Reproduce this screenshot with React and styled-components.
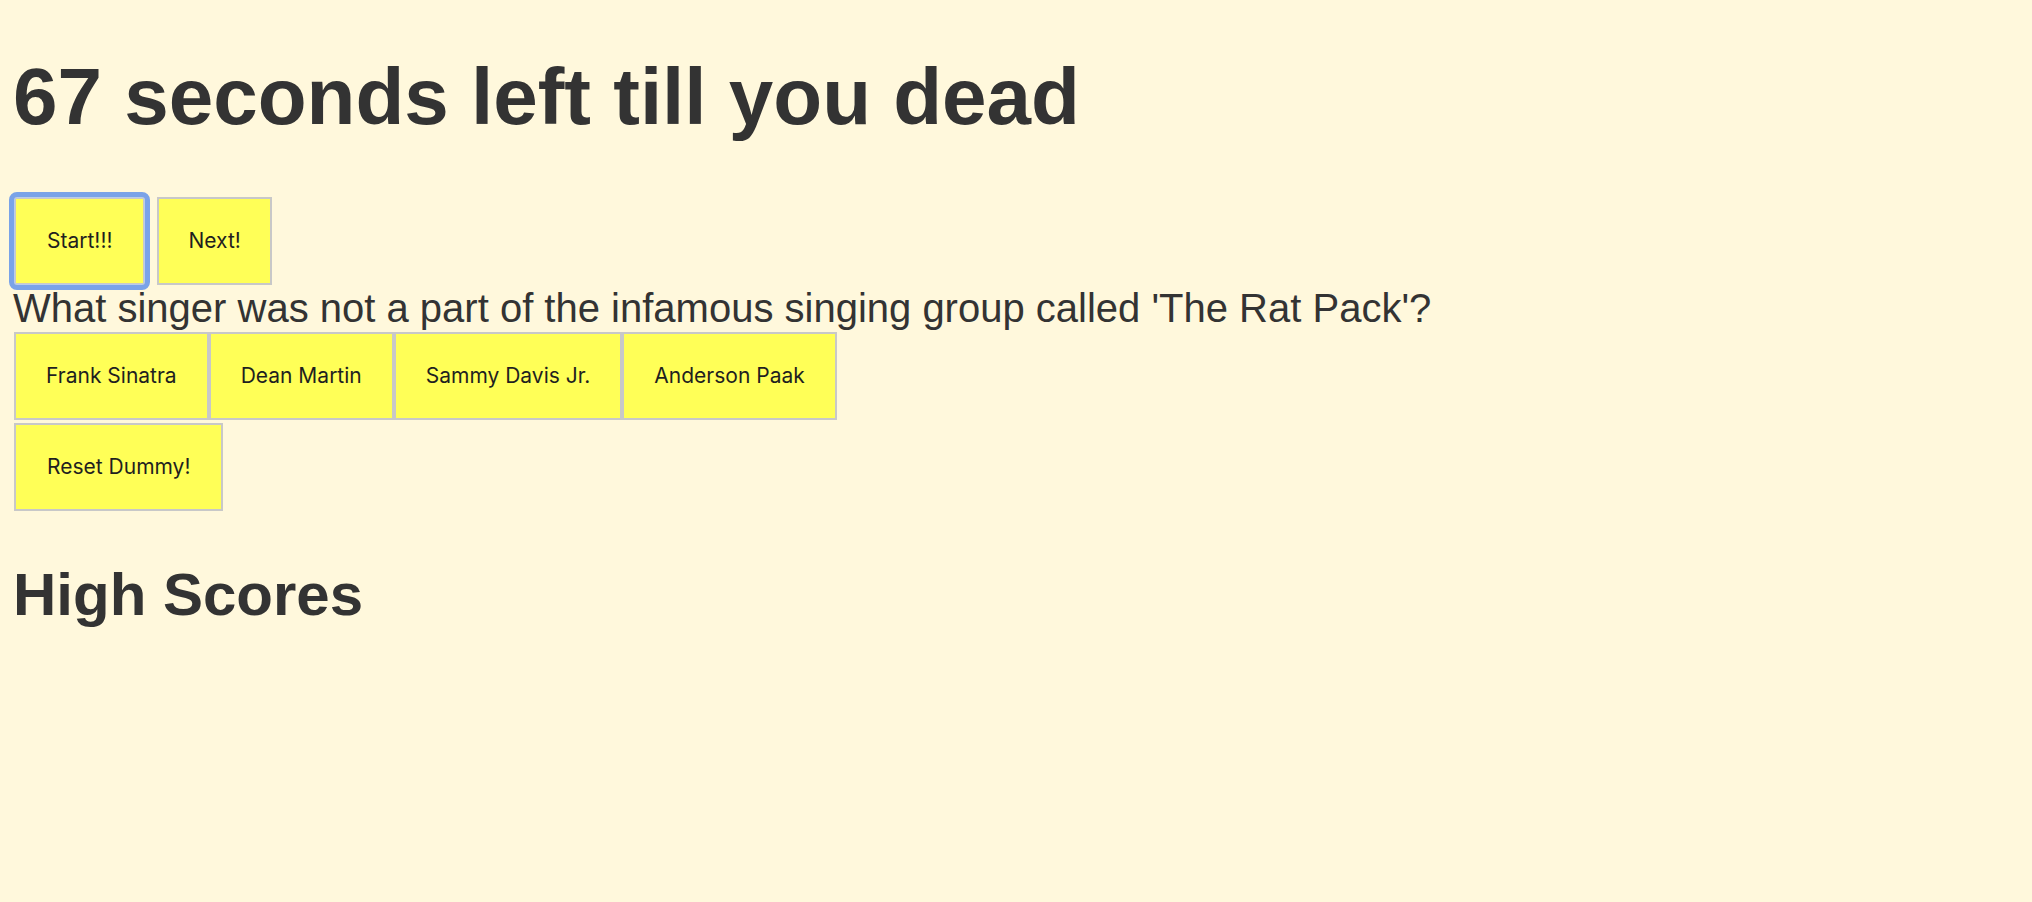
import React from "react";
import styled, { createGlobalStyle } from "styled-components";

const GlobalStyle = createGlobalStyle`
  html, body {
    margin: 0;
    padding: 0;
    background: #fff8dc;
  }
  body {
    font-family: "Liberation Sans", Arial, Helvetica, sans-serif;
    color: #333;
  }
`;

const Page = styled.main`
  padding: 0 13px;
  min-height: 902px;
  box-sizing: border-box;
  overflow: hidden;
`;

const Title = styled.h1`
  margin: 51px 0 54px;
  font-size: 80px;
  line-height: 92px;
  font-weight: 700;
  color: #333;
  white-space: nowrap;
`;

const Row = styled.div`
  display: flex;
  align-items: flex-start;
  gap: ${(p) => p.$gap || 0}px;
  margin-top: ${(p) => p.$top || 0}px;
  padding-left: 1px;
`;

const Button = styled.button`
  position: relative;
  box-sizing: border-box;
  height: 88px;
  margin: 0;
  padding: 0 ${(p) => p.$px || 30}px;
  background: #ffff57;
  border: 2px solid #c8c8c8;
  border-radius: 0;
  color: #1f1f1f;
  font-family: Inter, "Noto Sans", sans-serif;
  font-size: 21px;
  line-height: 24px;
  white-space: nowrap;
  cursor: pointer;
  outline: none;

  ${(p) =>
    p.$focused &&
    `
    &::after {
      content: "";
      position: absolute;
      inset: -7px;
      border: 5px solid #7aa3e8;
      border-radius: 8px;
      pointer-events: none;
      box-shadow: inset 0 0 0 1px #b9cde9;
    }
  `}
`;

const Question = styled.p`
  margin: 0;
  font-size: 40px;
  line-height: 46px;
  color: #333;
  white-space: nowrap;
`;

const SubTitle = styled.h2`
  margin: 49px 0 0;
  font-size: 60px;
  line-height: 69px;
  font-weight: 700;
  color: #333;
`;

const options = ["Frank Sinatra", "Dean Martin", "Sammy Davis Jr.", "Anderson Paak"];

export default function App() {
  return (
    <>
      <GlobalStyle />
      <Page>
        <Title>67 seconds left till you dead</Title>
        <Row $gap={12}>
          <Button $focused $px={31}>Start!!!</Button>
          <Button $px={29}>Next!</Button>
        </Row>
        <Question>What singer was not a part of the infamous singing group called 'The Rat Pack'?</Question>
        <Row $top={1}>
          {options.map((o) => (
            <Button key={o}>{o}</Button>
          ))}
        </Row>
        <Row $top={3}>
          <Button $px={31}>Reset Dummy!</Button>
        </Row>
        <SubTitle>High Scores</SubTitle>
      </Page>
    </>
  );
}
